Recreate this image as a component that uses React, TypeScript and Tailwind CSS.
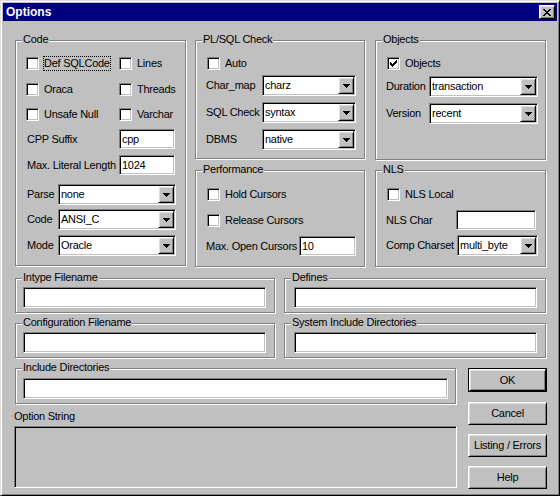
import type { ReactNode } from 'react';

// Classic 3D edges
const sunken =
  'border border-t-[#808080] border-l-[#808080] border-b-white border-r-white shadow-[inset_1px_1px_0_#000,inset_-1px_-1px_0_#c0c0c0]';
const raised =
  'border border-t-white border-l-white border-b-black border-r-black shadow-[inset_1px_1px_0_#dfdfdf,inset_-1px_-1px_0_#808080]';

function Pixels({ w, h, px }: { w: number; h: number; px: string[] }) {
  return (
    <svg width={w} height={h} viewBox={`0 0 ${w} ${h}`} shapeRendering="crispEdges">
      {px.flatMap((row, y) =>
        row.split('').map((c, x) => (c === 'X' ? <rect key={`${x}-${y}`} x={x} y={y} width={1} height={1} fill="#000" /> : null))
      )}
    </svg>
  );
}

const checkPx = ['......X', '.....XX', 'X...XXX', 'XX.XXX.', 'XXXXX..', '.XXX...', '..X....'];
const arrowPx = ['XXXXXXX', '.XXXXX.', '..XXX..', '...X...'];
const closePx = ['XX....XX', '.XX..XX.', '..XXXX..', '...XX...', '..XXXX..', '.XX..XX.', 'XX....XX'];

function Group({ title, className, children }: { title: string; className: string; children?: ReactNode }) {
  return (
    <div className={`relative border border-[#808080] shadow-[1px_1px_0_#fff,inset_1px_1px_0_#fff] ${className}`}>
      <span className="absolute -top-[8px] left-[6px] bg-[#c0c0c0] px-[1px] leading-[13px] whitespace-nowrap">{title}</span>
      {children}
    </div>
  );
}

function Check({ label, checked, focus, className = '' }: { label: string; checked?: boolean; focus?: boolean; className?: string }) {
  return (
    <div className={`flex items-center h-[13px] ${className}`}>
      <span className={`w-[13px] h-[13px] shrink-0 bg-white flex items-center justify-center ${sunken}`}>
        {checked && <Pixels w={7} h={7} px={checkPx} />}
      </span>
      {focus ? (
        <span className="ml-[4px] border border-dotted border-black leading-[13px] whitespace-nowrap">{label}</span>
      ) : (
        <span className="ml-[5px] whitespace-nowrap">{label}</span>
      )}
    </div>
  );
}

function Edit({ value = '', className }: { value?: string; className: string }) {
  return (
    <div className={`bg-white flex items-center pl-[2px] leading-none ${sunken} ${className}`}>{value}</div>
  );
}

function Combo({ value, className }: { value: string; className: string }) {
  return (
    <div className={`h-[21px] bg-white flex items-center p-[1px] pl-[2px] ${sunken} ${className}`}>
      <span className="flex-1 whitespace-nowrap">{value}</span>
      <span className={`w-[16px] h-[17px] bg-[#c0c0c0] flex items-center justify-center ${raised}`}>
        <Pixels w={7} h={4} px={arrowPx} />
      </span>
    </div>
  );
}

function Button({ label, primary }: { label: string; primary?: boolean }) {
  const face = (
    <div className={`w-full h-full flex items-center justify-center bg-[#c0c0c0] ${raised}`}>{label}</div>
  );
  return primary ? (
    <div className="w-[79px] h-[24px] border border-black">{face}</div>
  ) : (
    <div className="w-[79px] h-[23px]">{face}</div>
  );
}

function FileGroup({ title, width, inputWidth, left }: { title: string; width: string; inputWidth: string; left: string }) {
  return (
    <Group title={title} className={`${width} h-[35px] shrink-0`}>
      <div className={`mt-[8px] ${left}`}>
        <Edit className={`${inputWidth} h-[21px]`} />
      </div>
    </Group>
  );
}

export default function App() {
  return (
    <div className="w-[560px] h-[496px] bg-[#c0c0c0] p-[2px] border border-t-[#dfdfdf] border-l-[#dfdfdf] border-b-black border-r-black shadow-[inset_1px_1px_0_#fff,inset_-1px_-1px_0_#808080] font-['Liberation_Sans',Arial,sans-serif] text-[11px] tracking-[-0.25px] text-black select-none">
      {/* title bar */}
      <div className="h-[18px] bg-[#000080] flex items-center pl-[3px] pr-[2px]">
        <span className="flex-1 text-white font-bold text-[12px] tracking-normal">Options</span>
        <span className={`w-[16px] h-[14px] bg-[#c0c0c0] flex items-center justify-center ${raised}`}>
          <Pixels w={8} h={7} px={closePx} />
        </span>
      </div>

      {/* upper groups */}
      <div className="flex mt-[19px] ml-[12px] items-start">
        <Group title="Code" className="w-[171px] h-[226px] shrink-0 pl-[10px] pt-[16px]">
          <div className="flex">
            <div className="w-[93px]"><Check label="Def SQLCode" focus /></div>
            <Check label="Lines" />
          </div>
          <div className="flex mt-[13px]">
            <div className="w-[93px]"><Check label="Oraca" /></div>
            <Check label="Threads" />
          </div>
          <div className="flex mt-[12px]">
            <div className="w-[93px]"><Check label="Unsafe Null" /></div>
            <Check label="Varchar" />
          </div>
          <div className="flex items-center mt-[8px]">
            <span className="ml-[1px] w-[92px] whitespace-nowrap">CPP Suffix</span>
            <Edit value="cpp" className="w-[56px] h-[20px]" />
          </div>
          <div className="flex items-center mt-[6px]">
            <span className="ml-[1px] w-[92px] whitespace-nowrap">Max. Literal Length</span>
            <Edit value="1024" className="w-[56px] h-[20px]" />
          </div>
          <div className="flex items-center mt-[9px]">
            <span className="ml-[1px] w-[31px]">Parse</span>
            <Combo value="none" className="w-[118px]" />
          </div>
          <div className="flex items-center mt-[4px]">
            <span className="ml-[1px] w-[31px]">Code</span>
            <Combo value="ANSI_C" className="w-[118px]" />
          </div>
          <div className="flex items-center mt-[5px]">
            <span className="ml-[1px] w-[31px]">Mode</span>
            <Combo value="Oracle" className="w-[118px]" />
          </div>
        </Group>

        <div className="ml-[9px] flex flex-col">
          <Group title="PL/SQL Check" className="w-[170px] h-[119px] pl-[10px] pt-[16px]">
            <Check label="Auto" className="ml-[1px]" />
            <div className="flex items-center mt-[5px]">
              <span className="w-[56px]">Char_map</span>
              <Combo value="charz" className="w-[94px]" />
            </div>
            <div className="flex items-center mt-[6px]">
              <span className="w-[56px] whitespace-nowrap">SQL Check</span>
              <Combo value="syntax" className="w-[94px]" />
            </div>
            <div className="flex items-center mt-[6px]">
              <span className="w-[56px]">DBMS</span>
              <Combo value="native" className="w-[94px]" />
            </div>
          </Group>
          <Group title="Performance" className="w-[170px] h-[97px] mt-[11px] pl-[10px] pt-[17px]">
            <Check label="Hold Cursors" className="ml-[1px]" />
            <Check label="Release Cursors" className="ml-[1px] mt-[13px]" />
            <div className="flex items-center mt-[9px]">
              <span className="w-[93px] whitespace-nowrap">Max. Open Cursors</span>
              <Edit value="10" className="w-[57px] h-[20px]" />
            </div>
          </Group>
        </div>

        <div className="ml-[10px] flex flex-col">
          <Group title="Objects" className="w-[171px] h-[120px] pl-[10px] pt-[16px]">
            <Check label="Objects" checked className="ml-[1px]" />
            <div className="flex items-center mt-[6px]">
              <span className="w-[43px]">Duration</span>
              <Combo value="transaction" className="w-[109px]" />
            </div>
            <div className="flex items-center mt-[6px]">
              <span className="w-[43px]">Version</span>
              <Combo value="recent" className="w-[109px]" />
            </div>
          </Group>
          <Group title="NLS" className="w-[171px] h-[97px] mt-[10px] pl-[10px] pt-[17px]">
            <Check label="NLS Local" className="ml-[1px]" />
            <div className="flex items-center mt-[9px]">
              <span className="w-[70px] whitespace-nowrap">NLS Char</span>
              <Edit className="w-[80px] h-[20px]" />
            </div>
            <div className="flex items-center mt-[5px]">
              <span className="w-[71px] whitespace-nowrap">Comp Charset</span>
              <Combo value="multi_byte" className="w-[81px]" />
            </div>
          </Group>
        </div>
      </div>

      {/* file groups */}
      <div className="flex mt-[11px] ml-[12px]">
        <FileGroup title="Intype Filename" width="w-[260px]" inputWidth="w-[243px]" left="ml-[7px]" />
        <div className="ml-[9px]">
          <FileGroup title="Defines" width="w-[262px]" inputWidth="w-[243px]" left="ml-[9px]" />
        </div>
      </div>
      <div className="flex mt-[10px] ml-[12px]">
        <FileGroup title="Configuration Filename" width="w-[260px]" inputWidth="w-[243px]" left="ml-[7px]" />
        <div className="ml-[9px]">
          <FileGroup title="System Include Directories" width="w-[262px]" inputWidth="w-[243px]" left="ml-[9px]" />
        </div>
      </div>

      {/* bottom area */}
      <div className="flex mt-[10px] ml-[11px]">
        <div className="w-[443px] flex flex-col">
          <div className="ml-[1px]">
            <Group title="Include Directories" className="w-[441px] h-[36px]">
              <div className="mt-[9px] ml-[7px]">
                <Edit className="w-[425px] h-[21px]" />
              </div>
            </Group>
          </div>
          <div className="mt-[6px] h-[13px] leading-[13px]">Option String</div>
          <div className={`mt-[3px] h-[62px] bg-[#c0c0c0] ${sunken}`} />
        </div>
        <div className="ml-[11px] flex flex-col">
          <Button label="OK" primary />
          <div className="mt-[10px]"><Button label="Cancel" /></div>
          <div className="mt-[9px]"><Button label="Listing / Errors" /></div>
          <div className="mt-[9px]"><Button label="Help" /></div>
        </div>
      </div>
    </div>
  );
}
